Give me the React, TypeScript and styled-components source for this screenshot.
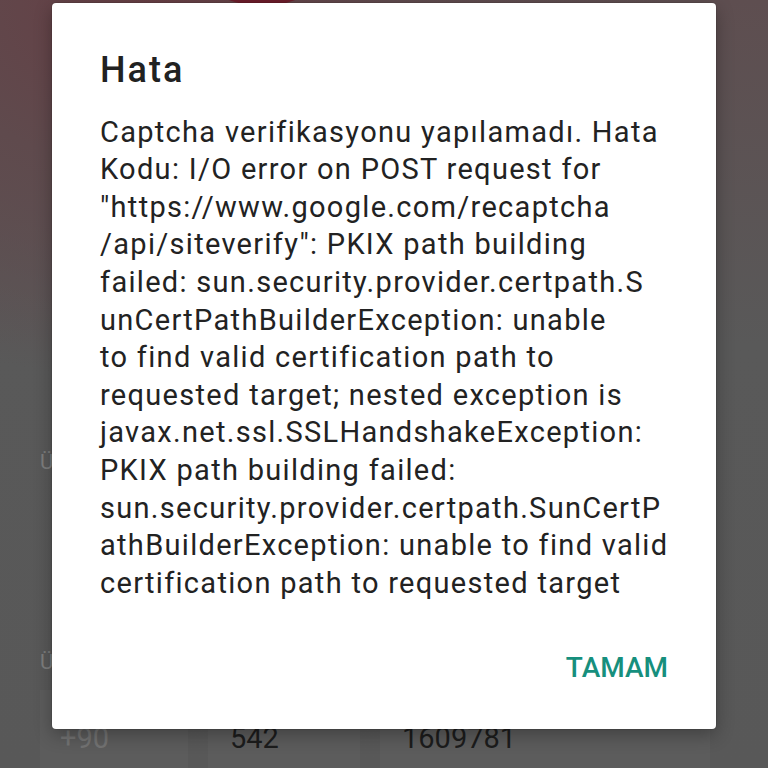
import React from "react"
import styled, { createGlobalStyle } from "styled-components"

const GlobalStyle = createGlobalStyle`
  html, body {
    margin: 0;
    padding: 0;
    background: #595959;
  }
  body {
    font-family: Roboto, "Noto Sans", "Liberation Sans", sans-serif;
  }
`

const Screen = styled.div`
  position: relative;
  width: 768px;
  height: 768px;
  overflow: hidden;
  display: flex;
  flex-direction: column;
  background: radial-gradient(
      ellipse 520px 380px at 20% 0%,
      #663e44 0%,
      #5f4a4d 45%,
      rgba(89, 89, 89, 0) 100%
    ),
    linear-gradient(180deg, #5e4e50 0%, #595959 45%, #585858 100%);
`

const Header = styled.div`
  flex-shrink: 0;
  height: 448px;
  padding-left: 168px;
  overflow: hidden;
`

const Logo = styled.svg`
  display: block;
  margin-top: -180px;
`

const Form = styled.div`
  flex-shrink: 0;
  display: flex;
  flex-direction: column;
  padding-left: 40px;
`

const FieldLabel = styled.div<{ $gap?: number }>`
  margin-top: ${(p) => p.$gap ?? 0}px;
  font-size: 21px;
  line-height: 28px;
  color: #7d7d7d;
  white-space: nowrap;
`

const InputRow = styled.div`
  display: flex;
  gap: 20px;
  margin-top: 14px;
  height: 120px;
`

const InputBox = styled.div<{ $width: number; $muted?: boolean }>`
  width: ${(p) => p.$width}px;
  box-sizing: border-box;
  padding: 28px 2px 0 ${(p) => (p.$muted ? 20 : 22)}px;
  background: #5c5c5c;
  font-size: 29px;
  line-height: 40px;
  color: ${(p) => (p.$muted ? "#737373" : "#1c1c1c")};
`

const Dialog = styled.div`
  position: absolute;
  left: 52px;
  top: 3px;
  width: 664px;
  height: 726px;
  box-sizing: border-box;
  padding: 46px 48px 0 48px;
  display: flex;
  flex-direction: column;
  background: #ffffff;
  border-radius: 4px;
  box-shadow: 0 0 0 1px rgba(0, 0, 0, 0.08), 0 6px 18px rgba(0, 0, 0, 0.3);
`

const Title = styled.h2`
  margin: 0;
  font-size: 36px;
  line-height: 42px;
  font-weight: 500;
  letter-spacing: 2px;
  color: #212121;
`

const Message = styled.div`
  margin-top: 22.6px;
  font-size: 29px;
  line-height: 37.6px;
  letter-spacing: 1.3px;
  color: #222222;
`

const Line = styled.span`
  display: block;
  white-space: nowrap;
`

const Actions = styled.div`
  display: flex;
  justify-content: flex-end;
  margin-top: 48px;
`

const TextButton = styled.button`
  border: none;
  background: none;
  padding: 0;
  font-family: inherit;
  font-size: 28px;
  line-height: 36px;
  font-weight: 500;
  color: #168f7d;
  cursor: pointer;
`

const lines = [
  "Captcha verifikasyonu yapılamadı. Hata",
  "Kodu: I/O error on POST request for",
  "\"https://www.google.com/recaptcha",
  "/api/siteverify\": PKIX path building",
  "failed: sun.security.provider.certpath.S",
  "unCertPathBuilderException: unable",
  "to find valid certification path to",
  "requested target; nested exception is",
  "javax.net.ssl.SSLHandshakeException:",
  "PKIX path building failed:",
  "sun.security.provider.certpath.SunCertP",
  "athBuilderException: unable to find valid",
  "certification path to requested target"
]

export default function App() {
  return (
    <>
      <GlobalStyle />
      <Screen>
        <Header>
          <Logo width="200" height="190" viewBox="0 0 200 190">
            <ellipse cx="94" cy="95" rx="90" ry="88" fill="none" stroke="#6b1d2a" strokeWidth="6" />
          </Logo>
        </Header>
        <Form>
          <FieldLabel>Ülke</FieldLabel>
          <FieldLabel $gap={172}>Üye Telefonu</FieldLabel>
          <InputRow>
            <InputBox $width={148} $muted>+90</InputBox>
            <InputBox $width={152}>542</InputBox>
            <InputBox $width={330}>1609781</InputBox>
          </InputRow>
        </Form>
        <Dialog>
          <Title>Hata</Title>
          <Message>
            {lines.map((l, i) => (
              <Line key={i}>{l}</Line>
            ))}
          </Message>
          <Actions>
            <TextButton>TAMAM</TextButton>
          </Actions>
        </Dialog>
      </Screen>
    </>
  )
}
